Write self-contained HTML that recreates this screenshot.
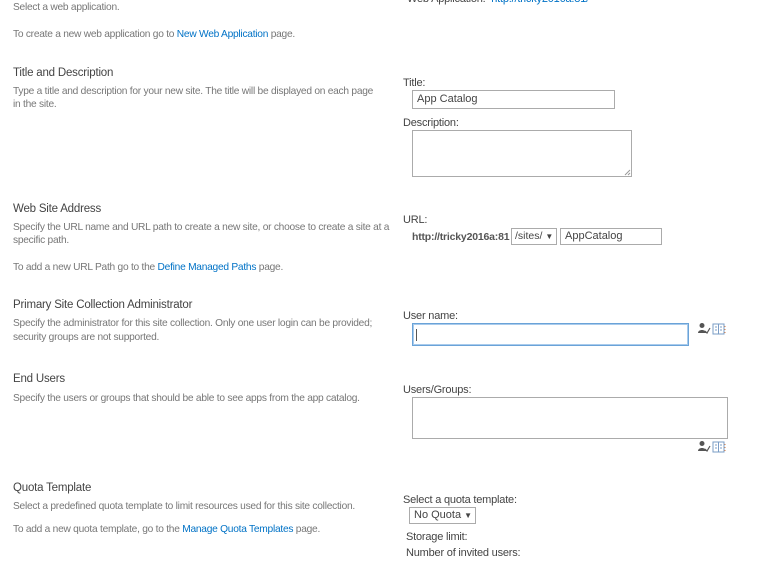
<!DOCTYPE html>
<html><head><meta charset="utf-8"><style>
html,body{margin:0;padding:0;background:#fff;width:772px;height:582px;overflow:hidden;position:relative;font-family:"Liberation Sans",sans-serif}
.t{position:absolute;white-space:nowrap;line-height:12px;letter-spacing:-0.25px;transform:translateY(2px)}
.d{font-size:10.2px;color:#777}
.h{font-size:11.5px;color:#444;letter-spacing:-0.2px}
.l{font-size:11px;color:#444;letter-spacing:-0.2px}
a{color:#0072c6;text-decoration:none}
.box{position:absolute;border:1px solid #ababab;background:#fff;box-sizing:border-box;font-size:11px;color:#444;padding-left:4px;line-height:15px}
.ic{position:absolute}
</style></head><body>
<div class="t d" style="left:13px;top:0px">Select a web application.</div>
<div class="t d" style="left:13px;top:27px">To create a new web application go to <a>New Web Application</a> page.</div>
<div class="t l" style="left:407px;top:-9px">Web Application: &nbsp;<a>http://tricky2016a:81/</a></div>

<div class="t h" style="left:13px;top:65px">Title and Description</div>
<div class="t d" style="left:13px;top:84px">Type a title and description for your new site. The title will be displayed on each page</div>
<div class="t d" style="left:13px;top:97px">in the site.</div>
<div class="t l" style="left:403px;top:75px">Title:</div>
<div class="box" style="left:412px;top:90px;width:203px;height:19px;line-height:17px">App Catalog</div>
<div class="t l" style="left:403px;top:115px">Description:</div>
<div class="box" style="left:412px;top:130px;width:220px;height:47px"></div>
<svg class="ic" style="left:624px;top:169px" width="7" height="7"><path d="M6 1L1 6M6 4L4 6" stroke="#999" stroke-width="1"/></svg>

<div class="t h" style="left:13px;top:201px">Web Site Address</div>
<div class="t d" style="left:13px;top:220px">Specify the URL name and URL path to create a new site, or choose to create a site at a</div>
<div class="t d" style="left:13px;top:233px">specific path.</div>
<div class="t d" style="left:13px;top:260px">To add a new URL Path go to the <a>Define Managed Paths</a> page.</div>
<div class="t l" style="left:403px;top:212px">URL:</div>
<div class="t l" style="left:412px;top:229px;font-weight:bold;color:#555;font-size:10.5px">http://tricky2016a:81</div>
<div class="box" style="left:511px;top:228px;width:46px;height:17px;font-size:10.5px;padding-left:3px">/sites/ <span style="font-size:8px">▼</span></div>
<div class="box" style="left:560px;top:228px;width:102px;height:17px">AppCatalog</div>

<div class="t h" style="left:13px;top:297px">Primary Site Collection Administrator</div>
<div class="t d" style="left:13px;top:316px">Specify the administrator for this site collection. Only one user login can be provided;</div>
<div class="t d" style="left:13px;top:330px">security groups are not supported.</div>
<div class="t l" style="left:403px;top:308px">User name:</div>
<div class="box" style="left:412px;top:323px;width:277px;height:23px;border:1px solid #6aa3d8;box-shadow:0 0 0 1px #a9cbec inset"><div style="position:absolute;left:3px;top:5px;width:1px;height:12px;background:#555"></div></div>

<div class="t h" style="left:13px;top:371px">End Users</div>
<div class="t d" style="left:13px;top:391px">Specify the users or groups that should be able to see apps from the app catalog.</div>
<div class="t l" style="left:403px;top:382px">Users/Groups:</div>
<div class="box" style="left:412px;top:397px;width:316px;height:42px"></div>

<div class="t h" style="left:13px;top:480px">Quota Template</div>
<div class="t d" style="left:13px;top:499px">Select a predefined quota template to limit resources used for this site collection.</div>
<div class="t d" style="left:13px;top:522px">To add a new quota template, go to the <a>Manage Quota Templates</a> page.</div>
<div class="t l" style="left:403px;top:492px">Select a quota template:</div>
<div class="box" style="left:409px;top:507px;width:67px;height:17px;padding-left:4px">No Quota <span style="font-size:8px">▼</span></div>
<div class="t l" style="left:406px;top:529px">Storage limit:</div>
<div class="t l" style="left:406px;top:545px">Number of invited users:</div>

<svg class="ic" style="left:697px;top:322px" width="32" height="14">
<circle cx="5" cy="3.5" r="2.5" fill="#555"/><path d="M1 11c0-4 8-4 8 0z" fill="#555"/><path d="M8 9l2 2 3-5" stroke="#555" fill="none" stroke-width="1.2"/>
<rect x="16" y="2" width="11" height="10" fill="#fff" stroke="#7a9cc6"/><path d="M21.5 2v10M18 5h2M18 8h2M23 5h2M23 8h2" stroke="#7a9cc6"/><path d="M28 4v1M28 7v1M28 10v1" stroke="#e07b39"/>
</svg>
<svg class="ic" style="left:697px;top:440px" width="32" height="14">
<circle cx="5" cy="3.5" r="2.5" fill="#555"/><path d="M1 11c0-4 8-4 8 0z" fill="#555"/><path d="M8 9l2 2 3-5" stroke="#555" fill="none" stroke-width="1.2"/>
<rect x="16" y="2" width="11" height="10" fill="#fff" stroke="#7a9cc6"/><path d="M21.5 2v10M18 5h2M18 8h2M23 5h2M23 8h2" stroke="#7a9cc6"/><path d="M28 4v1M28 7v1M28 10v1" stroke="#e07b39"/>
</svg>
</body></html>
